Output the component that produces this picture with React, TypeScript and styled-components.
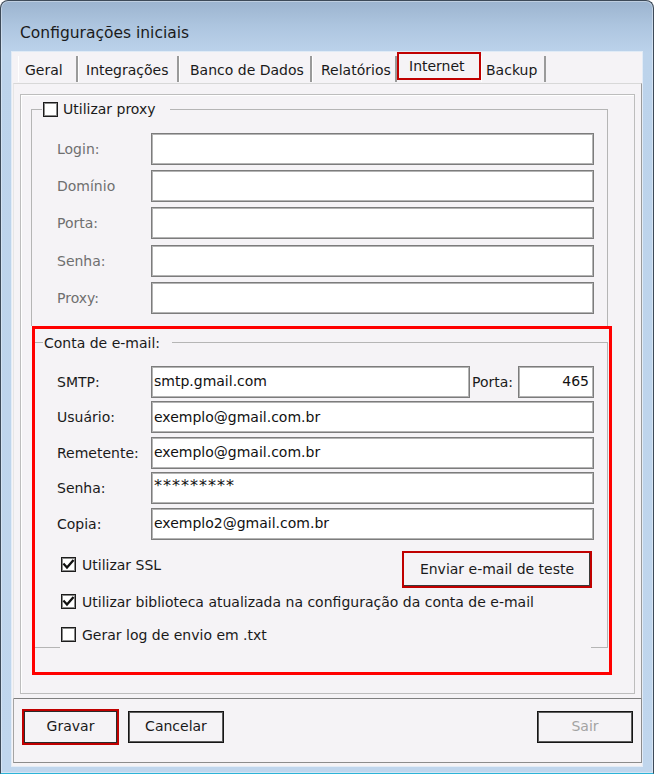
import React from "react";
import styled, { createGlobalStyle } from "styled-components";

const GlobalStyle = createGlobalStyle`
  html, body { margin: 0; padding: 0; background: #ffffff; }
  body {
    font-family: "DejaVu Sans", Verdana, sans-serif;
    font-size: 14px;
    color: #1a1a1a;
  }
  * { box-sizing: border-box; }
`;

const Window = styled.div`
  width: 654px;
  height: 774px;
  border: 1px solid #3d4a58;
  border-bottom: 1px solid #2cb4d8;
  border-radius: 8px 8px 0 0;
  background: linear-gradient(180deg, #9cb4cf 0px, #aec6e0 26px, #bcd3eb 52px, #c0d6ed 100%);
  box-shadow: inset 0 0 0 1px rgba(255, 255, 255, 0.35);
  display: flex;
  flex-direction: column;
  padding: 0 11px 7px 11px;
`;

const TitleBar = styled.div`
  height: 51px;
  flex: none;
  padding: 22px 0 0 8px;
  font-size: 15.5px;
  line-height: 20px;
  color: #1b1b1b;
`;

const Client = styled.div`
  flex: 1;
  background: #f5f3f6;
  box-shadow: 0 0 0 1px rgba(255, 255, 255, 0.55);
  display: flex;
  flex-direction: column;
`;

const TabStrip = styled.div`
  height: 31px;
  flex: none;
  display: flex;
  align-items: flex-end;
  padding-left: 6px;
`;

const Tab = styled.div<{ $w: number; $pl: number; $active?: boolean }>`
  width: ${(p) => p.$w}px;
  flex: none;
  white-space: nowrap;
  display: flex;
  align-items: center;
  padding-left: ${(p) => p.$pl}px;
  height: ${(p) => (p.$active ? 28 : 26)}px;
  margin-bottom: ${(p) => (p.$active ? 3 : 1)}px;
  padding-top: ${(p) => (p.$active ? 0 : 2)}px;
  border-left: ${(p) => (p.$active ? "2px solid #c00000" : "1px solid #ffffff")};
  border-right: ${(p) => (p.$active ? "2px solid #c00000" : "2px solid #9a9a9a")};
  border-top: ${(p) => (p.$active ? "2px solid #c00000" : "none")};
  border-bottom: ${(p) => (p.$active ? "2px solid #c00000" : "none")};
  color: #1a1a1a;
`;

const TabPage = styled.div`
  height: 616px;
  flex: none;
  margin-left: 1px;
  border-top: 1px solid #d8d8d8;
  border-left: 1px solid #e6e6e6;
  border-right: 1px solid #9a9a9a;
  border-bottom: 1px solid #7f7f7f;
  padding: 10px 6px 4px 6px;
  display: flex;
  flex-direction: column;
`;

const InnerPanel = styled.div`
  flex: 1;
  border: 1px solid #bdbdbd;
  box-shadow: inset 1px 1px 0 #ffffff;
  padding: 5px 26px 0 10px;
  display: flex;
  flex-direction: column;
  align-items: flex-start;
`;

const ProxyGroup = styled.fieldset`
  margin: 0;
  padding: 0;
  width: 577px;
  border: 1px solid #b5b5b5;
  border-bottom: none;
  min-width: 0;
`;

const Legend = styled.legend<{ $ml: number; $pr: number }>`
  margin-left: ${(p) => p.$ml}px;
  padding: 0 ${(p) => p.$pr}px 0 1px;
  height: 18px;
  line-height: 18px;
  display: flex;
  align-items: center;
  gap: 5px;
  color: #1a1a1a;
`;

const Rows = styled.div<{ $pt: number; $gap: number; $pb: number; $pl: number }>`
  display: flex;
  flex-direction: column;
  gap: ${(p) => p.$gap}px;
  padding: ${(p) => p.$pt}px 13px ${(p) => p.$pb}px ${(p) => p.$pl}px;
`;

const FieldRow = styled.div`
  height: 32px;
  display: flex;
  align-items: center;
`;

const Label = styled.span<{ $disabled?: boolean; $w?: number }>`
  width: ${(p) => (p.$w ? `${p.$w}px` : "auto")};
  flex: none;
  white-space: nowrap;
  color: ${(p) => (p.$disabled ? "#6f6f6f" : "#1a1a1a")};
`;

const Input = styled.div<{ $w?: number; $right?: boolean; $secret?: boolean }>`
  height: 32px;
  ${(p) => (p.$w ? `width: ${p.$w}px; flex: none;` : "flex: 1;")}
  background: #ffffff;
  border: 1px solid #7c7c7c;
  box-shadow: inset 0 0 0 1px #b4b4b4;
  display: flex;
  align-items: ${(p) => (p.$secret ? "flex-start" : "center")};
  justify-content: ${(p) => (p.$right ? "flex-end" : "flex-start")};
  padding: ${(p) => (p.$secret ? "3px 4px 0 2px" : "0 4px 1px 2px")};
  font-size: ${(p) => (p.$secret ? "16px" : "14px")};
  letter-spacing: ${(p) => (p.$secret ? "1px" : "0")};
  color: #111111;
  white-space: nowrap;
  overflow: hidden;
`;

const PortaLabel = styled.span`
  flex: none;
  margin: 0 5px 0 2px;
  color: #1a1a1a;
`;

const RedFrame = styled.div`
  margin-left: 1px;
  width: 580px;
  height: 349px;
  flex: none;
  border: 3px solid #ff0000;
  padding: 5px 1px 0 0;
`;

const MailGroup = styled.fieldset`
  margin: 0;
  padding: 0;
  min-width: 0;
  border: 1px solid #b5b5b5;
  border-left: none;
  border-bottom: none;
  background:
    linear-gradient(#b5b5b5, #b5b5b5) left bottom / 25px 1px no-repeat,
    linear-gradient(#b5b5b5, #b5b5b5) right bottom / 16px 1px no-repeat;
  padding-bottom: 4px;
`;

const CheckArea = styled.div`
  display: flex;
  flex-direction: column;
  padding: 11px 13px 0 22px;
`;

const CheckRow = styled.div<{ $mt: number }>`
  display: flex;
  align-items: flex-start;
  justify-content: space-between;
  margin-top: ${(p) => p.$mt}px;
`;

const CheckLine = styled.label<{ $mt?: number }>`
  display: flex;
  align-items: center;
  height: 18px;
  gap: 6px;
  margin-top: ${(p) => p.$mt ?? 0}px;
  padding-left: 4px;
  white-space: nowrap;
  color: #1a1a1a;
`;

const Box = styled.span`
  width: 15px;
  height: 15px;
  flex: none;
  background: #ffffff;
  border: 1px solid #1c1c1c;
  box-shadow: inset 0 0 0 1px #8a8a8a;
  display: inline-flex;
  align-items: center;
  justify-content: center;
`;

const TestButton = styled.div`
  width: 190px;
  height: 37px;
  margin-right: 2px;
  border: 2px solid #c00000;
  box-shadow: inset -1px -1px 0 #3a3a3a;
  display: flex;
  align-items: center;
  justify-content: center;
  padding-bottom: 1px;
  color: #1a1a1a;
`;

const ButtonPanel = styled.div`
  height: 64px;
  flex: none;
  margin-left: 1px;
  border-left: 1px solid #a4a4a4;
  border-right: 1px solid #8c8c8c;
  border-bottom: 1px solid #8c8c8c;
  padding: 0 8px 8px 8px;
  display: flex;
  align-items: center;
  gap: 9px;
`;

const Button = styled.div<{ $highlight?: boolean; $disabled?: boolean }>`
  width: ${(p) => (p.$highlight ? 97 : 96)}px;
  height: ${(p) => (p.$highlight ? 36 : 32)}px;
  flex: none;
  border: ${(p) => (p.$highlight ? "2px solid #c00000" : "1px solid #151515")};
  box-shadow: ${(p) =>
    p.$highlight ? "inset 0 0 0 1px #2a2a2a" : "inset 0 0 0 1px #5c5c5c"};
  display: flex;
  align-items: center;
  justify-content: center;
  padding-bottom: 1px;
  color: ${(p) => (p.$disabled ? "#a3a3a3" : "#1a1a1a")};
  background: #f5f3f6;
`;

const Spacer = styled.div`
  flex: 1;
`;

function CheckBox({ checked }: { checked?: boolean }) {
  return (
    <Box>
      {checked && (
        <svg width="13" height="13" viewBox="0 0 13 13">
          <path
            d="M2.2 6.4 L5 9.6 L10.8 2.8"
            fill="none"
            stroke="#111"
            strokeWidth="2.3"
            strokeLinecap="square"
          />
        </svg>
      )}
    </Box>
  );
}

const tabs = [
  { label: "Geral", w: 60, pl: 6 },
  { label: "Integrações", w: 101, pl: 7 },
  { label: "Banco de Dados", w: 133, pl: 10 },
  { label: "Relatórios", w: 85, pl: 8 },
  { label: "Internet", w: 84, pl: 10, active: true },
  { label: "Backup", w: 65, pl: 4 },
];

const proxyFields = ["Login:", "Domínio", "Porta:", "Senha:", "Proxy:"];

const mailFields = [
  { label: "Usuário:", value: "exemplo@gmail.com.br" },
  { label: "Remetente:", value: "exemplo@gmail.com.br" },
  { label: "Senha:", value: "*********", secret: true },
  { label: "Copia:", value: "exemplo2@gmail.com.br" },
];

export default function App() {
  return (
    <>
      <GlobalStyle />
      <Window>
        <TitleBar>Configurações iniciais</TitleBar>
        <Client>
          <TabStrip>
            {tabs.map((t) => (
              <Tab key={t.label} $w={t.w} $pl={t.pl} $active={t.active}>
                {t.label}
              </Tab>
            ))}
          </TabStrip>
          <TabPage>
            <InnerPanel>
              <ProxyGroup>
                <Legend $ml={10} $pr={14}>
                  <CheckBox />
                  Utilizar proxy
                </Legend>
                <Rows $pt={15} $gap={5.2} $pb={12} $pl={25}>
                  {proxyFields.map((f) => (
                    <FieldRow key={f}>
                      <Label $disabled $w={94}>
                        {f}
                      </Label>
                      <Input />
                    </FieldRow>
                  ))}
                </Rows>
              </ProxyGroup>
              <RedFrame>
                <MailGroup>
                  <Legend $ml={8} $pr={12}>
                    Conta de e-mail:
                  </Legend>
                  <Rows $pt={14} $gap={3.5} $pb={0} $pl={22}>
                    <FieldRow>
                      <Label $w={94}>SMTP:</Label>
                      <Input>smtp.gmail.com</Input>
                      <PortaLabel>Porta:</PortaLabel>
                      <Input $w={76} $right>
                        465
                      </Input>
                    </FieldRow>
                    {mailFields.map((f) => (
                      <FieldRow key={f.label}>
                        <Label $w={94}>{f.label}</Label>
                        <Input $secret={f.secret}>{f.value}</Input>
                      </FieldRow>
                    ))}
                  </Rows>
                  <CheckArea>
                    <CheckRow $mt={0}>
                      <CheckLine $mt={5}>
                        <CheckBox checked />
                        Utilizar SSL
                      </CheckLine>
                      <TestButton>Enviar e-mail de teste</TestButton>
                    </CheckRow>
                    <CheckRow $mt={5}>
                      <CheckLine>
                        <CheckBox checked />
                        Utilizar biblioteca atualizada na configuração da conta de e-mail
                      </CheckLine>
                    </CheckRow>
                    <CheckRow $mt={15}>
                      <CheckLine>
                        <CheckBox />
                        Gerar log de envio em .txt
                      </CheckLine>
                    </CheckRow>
                  </CheckArea>
                </MailGroup>
              </RedFrame>
            </InnerPanel>
          </TabPage>
          <ButtonPanel>
            <Button $highlight>Gravar</Button>
            <Button>Cancelar</Button>
            <Spacer />
            <Button $disabled>Sair</Button>
          </ButtonPanel>
        </Client>
      </Window>
    </>
  );
}
